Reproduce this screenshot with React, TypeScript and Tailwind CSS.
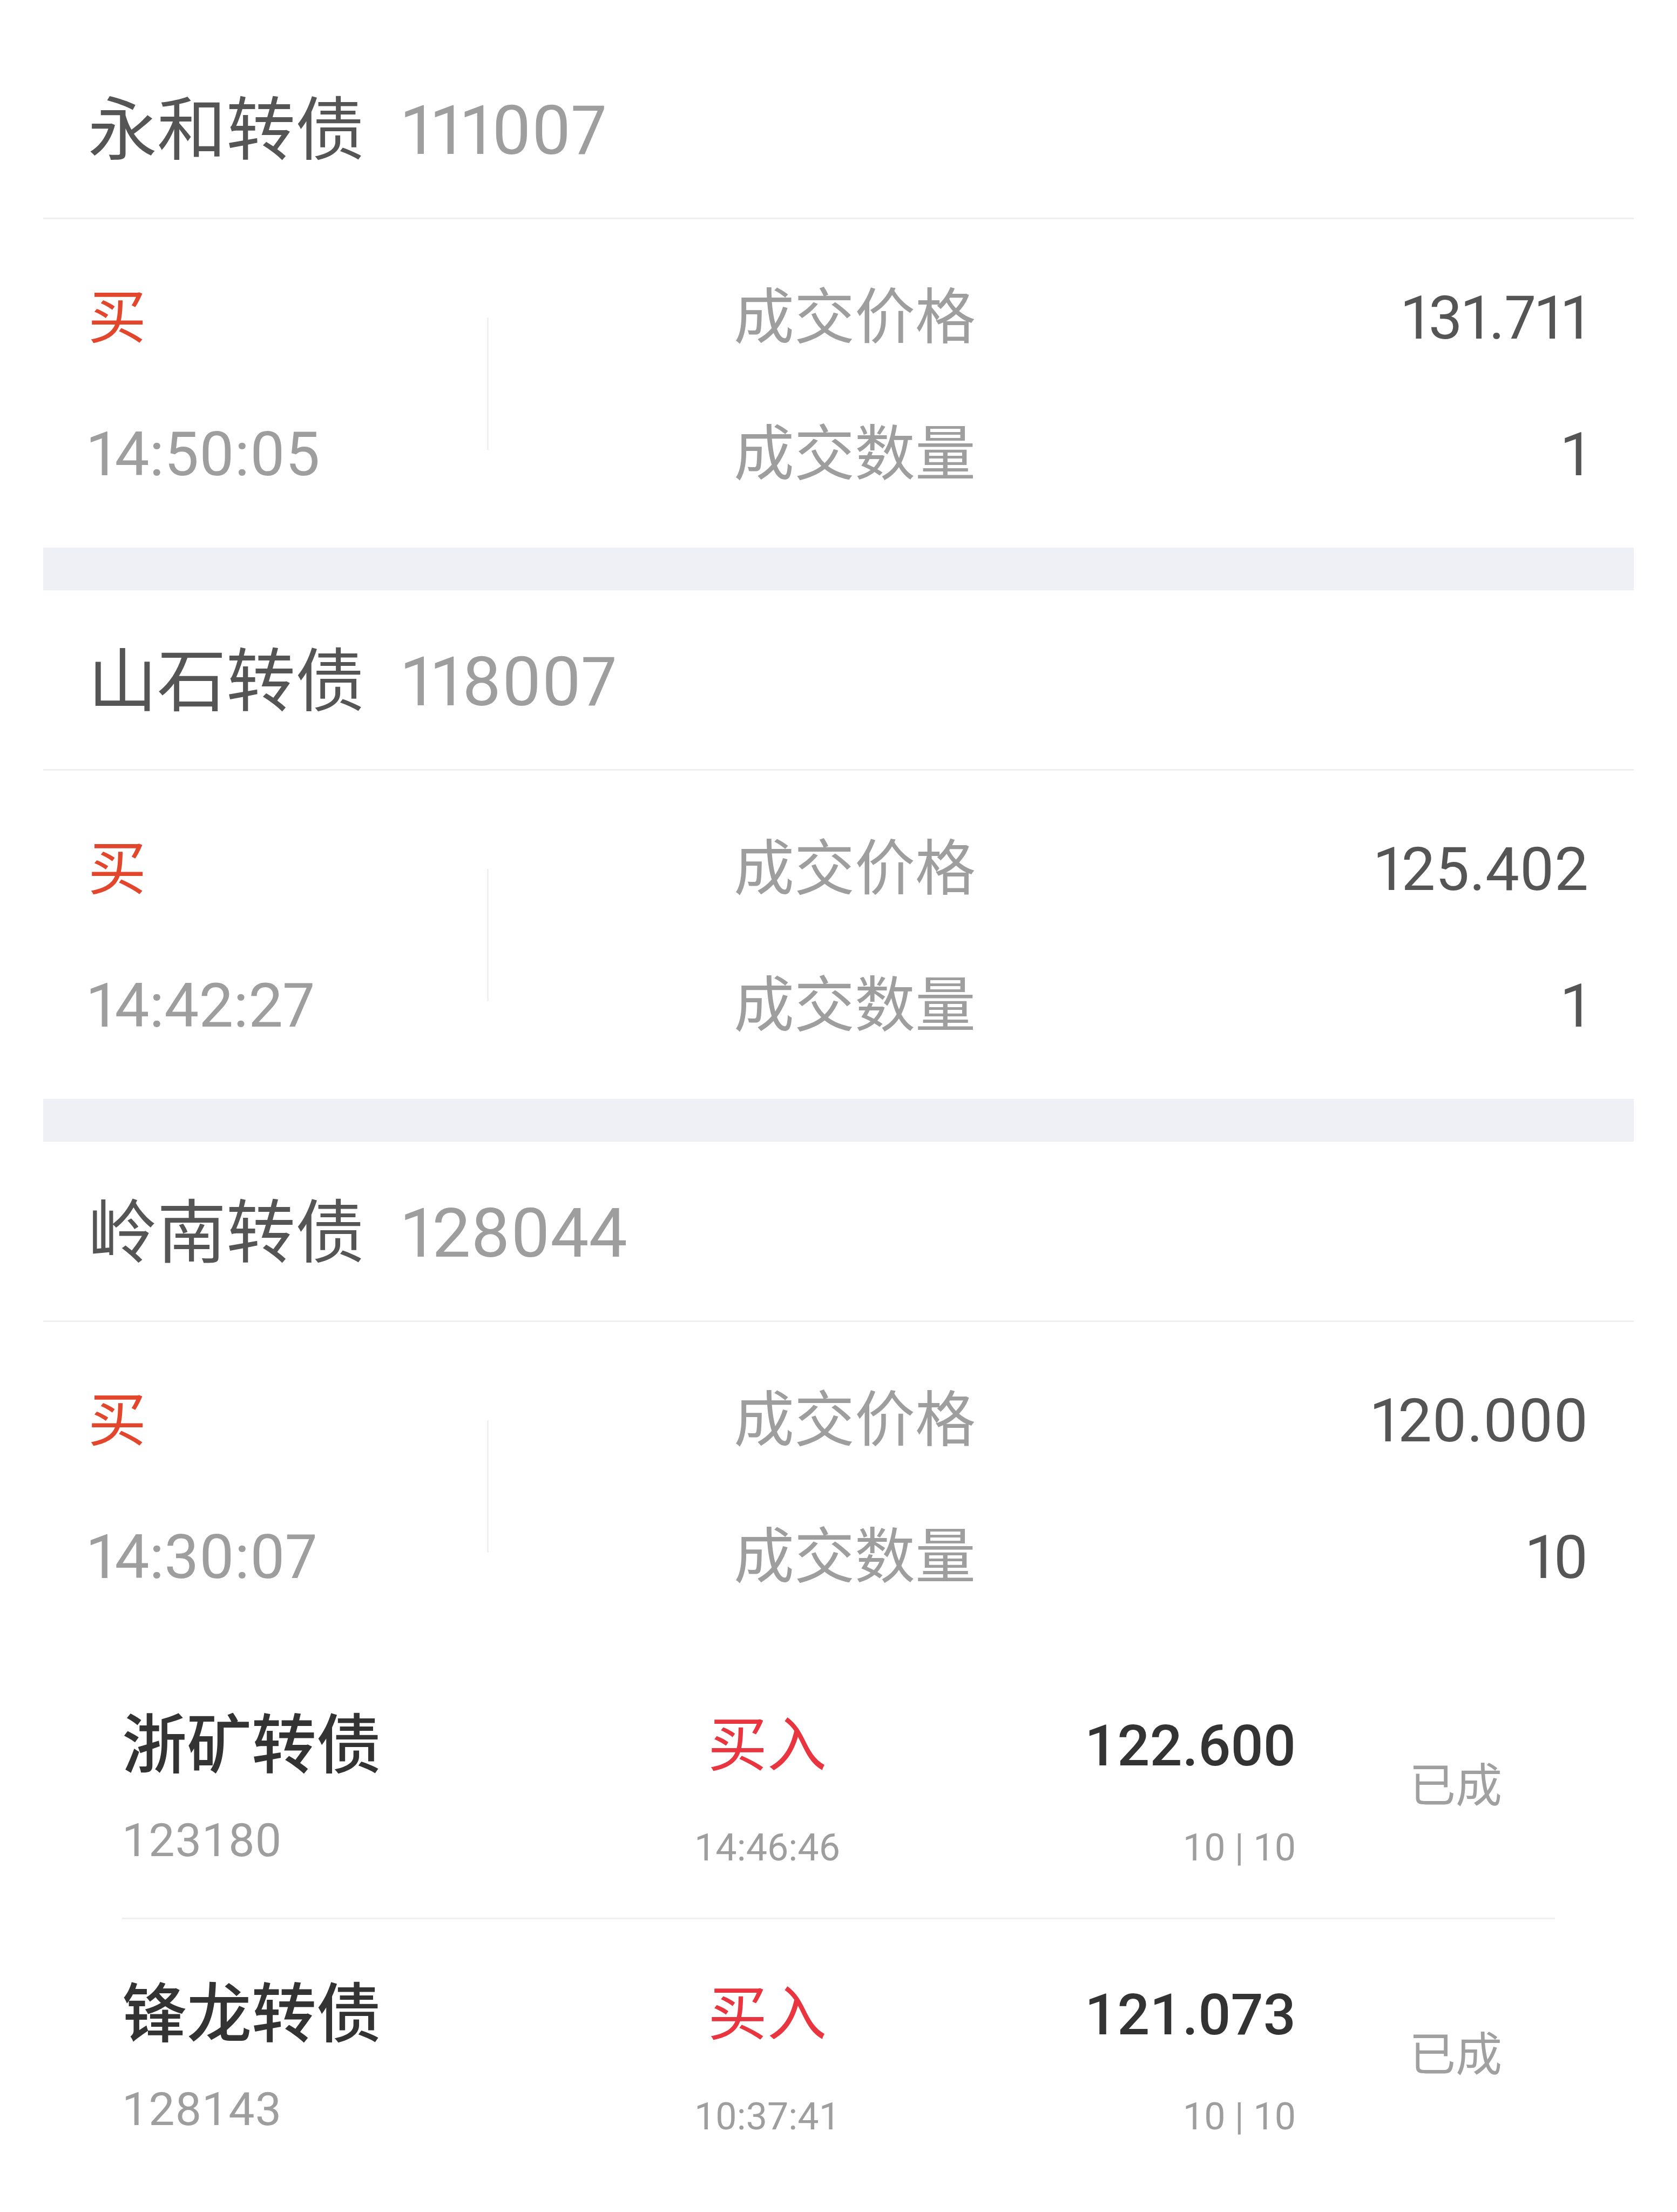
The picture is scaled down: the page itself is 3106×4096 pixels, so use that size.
import React from 'react';

interface Trade {
  name: string;
  code: string;
  side: string;
  time: string;
  price: string;
  qty: string;
}

interface Order {
  name: string;
  code: string;
  side: string;
  time: string;
  price: string;
  filled: string;
  status: string;
}

const trades: Trade[] = [
  { name: '永和转债', code: '111007', side: '买', time: '14:50:05', price: '131.711', qty: '1' },
  { name: '山石转债', code: '118007', side: '买', time: '14:42:27', price: '125.402', qty: '1' },
  { name: '岭南转债', code: '128044', side: '买', time: '14:30:07', price: '120.000', qty: '10' },
];

const orders: Order[] = [
  { name: '浙矿转债', code: '123180', side: '买入', time: '14:46:46', price: '122.600', filled: '10 | 10', status: '已成' },
  { name: '锋龙转债', code: '128143', side: '买入', time: '10:37:41', price: '121.073', filled: '10 | 10', status: '已成' },
];

const TradeCard: React.FC<{ trade: Trade; last: boolean }> = ({ trade, last }) => {
  return (
    <div>
      {/* header */}
      <div className="h-[331px] pt-[9px] pl-[83px] flex items-center">
        <span className="text-[128px] leading-[160px] text-[#555555]">{trade.name}</span>
        <span className="ml-[70px] text-[127px] leading-[160px] text-[#9e9e9e] proportional-nums">{trade.code}</span>
      </div>
      <div className="h-[3px] bg-[#efefef]" />

      {/* rows */}
      <div className="h-[608px] pt-[56px] pl-[83px] pr-[84px] flex items-start">
        <div className="w-[739px] flex flex-col">
          <div className="h-[253px] flex items-center text-[108px] text-[#e2472d]">{trade.side}</div>
          <div className="h-[253px] flex items-center text-[114px] text-[#9e9e9e] proportional-nums">{trade.time}</div>
        </div>
        <div className="mt-[126px] h-[245px] w-[3px] bg-[#f0f0f0]" />
        <div className="flex-1 pl-[454px] flex flex-col">
          <div className="h-[253px] flex items-center justify-between">
            <span className="text-[112px] text-[#9e9e9e]">成交价格</span>
            <span className="text-[112px] text-[#555555] proportional-nums">{trade.price}</span>
          </div>
          <div className="h-[253px] flex items-center justify-between">
            <span className="text-[112px] text-[#9e9e9e]">成交数量</span>
            <span className="text-[112px] text-[#555555] proportional-nums">{trade.qty}</span>
          </div>
        </div>
      </div>

      {!last && <div className="h-[79px] bg-[#eff0f5]" />}
    </div>
  );
};

const OrderRow: React.FC<{ order: Order; last: boolean }> = ({ order, last }) => {
  return (
    <div>
      <div className="h-[495px] flex items-start pt-[102px]">
        <div className="w-[895px] flex flex-col">
          <span className="leading-[150px] text-[120px] font-medium text-[#333333]">{order.name}</span>
          <span className="mt-[25px] leading-[150px] text-[86px] text-[#9e9e9e] tracking-[1px]">{order.code}</span>
        </div>
        <div className="w-[600px] flex flex-col items-center">
          <span className="leading-[150px] text-[110px] text-[#e8353f]">{order.side}</span>
          <span className="mt-[38px] leading-[150px] text-[70px] text-[#9e9e9e]">{order.time}</span>
        </div>
        <div className="w-[679px] flex flex-col items-end">
          <span className="leading-[150px] text-[106px] font-medium text-[#333333]">{order.price}</span>
          <span className="mt-[38px] leading-[150px] text-[70px] text-[#9e9e9e]">{order.filled}</span>
        </div>
        <div className="flex-1 pl-[210px] mt-[75px]">
          <span className="leading-[150px] text-[86px] text-[#a0a0a0]">{order.status}</span>
        </div>
      </div>
      {!last && <div className="h-[3px] bg-[#efefef]" />}
    </div>
  );
};

export default function App() {
  return (
    <div className="w-[3106px] min-h-[4096px] bg-white font-['Roboto','Noto_Sans_CJK_SC',sans-serif]">
      <div className="pt-[72px] mx-[80px]">
        {trades.map((t, i) => (
          <TradeCard key={t.code} trade={t} last={i === trades.length - 1} />
        ))}
      </div>
      <div className="mx-[226px]">
        {orders.map((o, i) => (
          <OrderRow key={o.code} order={o} last={i === orders.length - 1} />
        ))}
      </div>
    </div>
  );
}
